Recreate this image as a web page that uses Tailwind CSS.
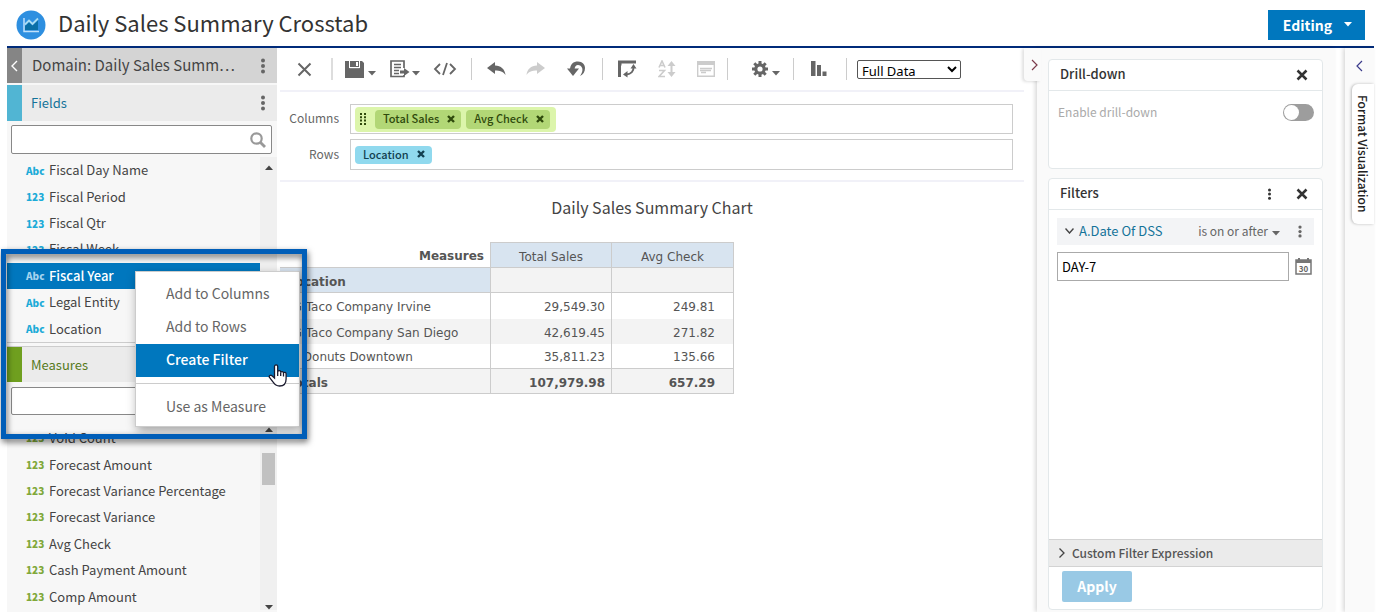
<!DOCTYPE html>
<html lang="en">
<head>
<meta charset="utf-8">
<title>Daily Sales Summary Crosstab</title>
<script src="https://cdn.jsdelivr.net/npm/@tailwindcss/browser@4"></script>
</head>
<body class="flex h-screen flex-col overflow-hidden bg-white pl-[7px] pr-0.5 font-['Noto_Sans_CJK_SC','Noto_Sans',sans-serif] text-[13px] leading-5 text-[#444]">
<svg class="hidden">
  <symbol id="dots" viewBox="0 0 4 16"><circle cx="2" cy="2.5" r="2"/><circle cx="2" cy="8" r="2"/><circle cx="2" cy="13.5" r="2"/></symbol>
  <symbol id="close" viewBox="0 0 12 12"><path d="M1.5 1.5l9 9M10.500 1.500l-9 9" fill="none" stroke="currentColor" stroke-width="2.500"/></symbol>
  <symbol id="remove" viewBox="0 0 8 8"><path d="M1 1l6 6M7 1L1 7" fill="none" stroke="currentColor" stroke-width="2.400"/></symbol>
  <symbol id="caret" viewBox="0 0 8 5"><path d="M0 0h8L4 4.500z"/></symbol>
</svg>

<header class="flex h-12 shrink-0 items-center border-b-2 border-[#002b7a] pl-[9px] pr-[9px] pt-[3px]">
  <svg class="mr-3 size-[30px] shrink-0" viewBox="0 0 30 30">
    <circle cx="15" cy="15" r="14.500" fill="#2e8fe0"/>
    <path d="M9 20V16l4-4 3.500 3.500L22 10v10z" fill="#0a6fa6"/>
    <path d="M8 8v13.500h15" fill="none" stroke="#bfe0fa" stroke-width="1.500"/>
    <path d="M9 14.500l4-4 3.500 3.500 5.500-5.500" fill="none" stroke="#a9dcf2" stroke-width="1.800"/>
  </svg>
  <h1 class="flex-1 pb-[5px] text-[22px] leading-8 text-[#333]">Daily Sales Summary Crosstab</h1>
  <button class="flex h-[30px] w-[97px] items-center justify-end gap-3 bg-[#0077be] pr-[13px] text-sm font-bold text-white">Editing
    <svg class="h-[5px] w-2 fill-current"><use href="#caret"/></svg>
  </button>
</header>

<div class="flex min-h-0 flex-1">
  <aside class="relative flex w-[270px] shrink-0 flex-col bg-[#f7f7f7]">
    <div class="flex h-[35px] shrink-0 items-center bg-[#d4d4d4] pr-3">
      <button class="flex h-full w-[15px] items-center justify-center bg-[#858585]" aria-label="Collapse">
        <svg class="h-3 w-2" viewBox="0 0 8 12"><path d="M6 1L1 6l5 5" fill="none" stroke="#fff" stroke-width="1.400"/></svg>
      </button>
      <h2 class="flex-1 pb-0.5 pl-2.5 text-[15px]">Domain: Daily Sales Summ…</h2>
      <button aria-label="Domain options"><svg class="h-4 w-1 fill-[#666]"><use href="#dots"/></svg></button>
    </div>
    <div class="mt-0.5 flex h-9 shrink-0 items-center bg-[#ebebeb] pr-3">
      <span class="h-full w-[15px] bg-[#51b5d3]"></span>
      <h3 class="flex-1 pl-[9px] text-[#147399]">Fields</h3>
      <button aria-label="Field options"><svg class="h-4 w-1 fill-[#666]"><use href="#dots"/></svg></button>
    </div>
    <label class="ml-1 mr-[5px] mt-1 flex h-[29px] shrink-0 items-center rounded-[2px] border border-[#888] bg-white pr-[5px]">
      <input type="text" aria-label="Search fields" class="w-0 flex-1 outline-none">
      <svg class="size-4" viewBox="0 0 16 16" fill="none" stroke="#999"><circle cx="6.500" cy="6.500" r="5.200" stroke-width="2.200"/><path d="M10 10l5 5" stroke-width="2.800"/></svg>
    </label>
    <div class="mt-[3px] flex h-[186px] shrink-0 border-b border-[#ccc]">
      <ul class="flex flex-1 flex-col [&>li]:flex [&>li]:flex-1 [&>li]:items-center [&>li]:pl-[19px] [&_b]:w-[23px] [&_b]:pt-px [&_b]:text-[10px] [&_b]:font-black [&_b]:text-[#1cabd8]">
        <li><b>Abc</b>Fiscal Day Name</li>
        <li><b>123</b>Fiscal Period</li>
        <li><b>123</b>Fiscal Qtr</li>
        <li><b>123</b>Fiscal Week</li>
        <li class="bg-[#0077be] font-medium text-white [&>b]:text-[#a5d3ee]!"><b>Abc</b>Fiscal Year</li>
        <li><b>Abc</b>Legal Entity</li>
        <li><b>Abc</b>Location</li>
      </ul>
      <div class="w-[17px] bg-[#f0f0f0] pl-[5px] pt-2"><svg class="h-[5px] w-2 rotate-180 fill-[#444]"><use href="#caret"/></svg></div>
    </div>
    <div class="mt-[3px] flex h-9 shrink-0 items-center border-t border-[#ccc] bg-[#ebebeb]">
      <span class="h-full w-[15px] bg-[#6f9f1f]"></span>
      <h3 class="pl-[9px] text-[#567a1c]">Measures</h3>
    </div>
    <label class="ml-1 mr-[5px] mt-[5px] flex h-7 shrink-0 items-center rounded-[2px] border border-[#888] bg-white">
      <input type="text" aria-label="Search measures" class="w-0 flex-1 outline-none">
    </label>
    <div class="mt-[10px] flex h-[185px] shrink-0">
      <ul class="flex flex-1 flex-col [&>li]:flex [&>li]:flex-1 [&>li]:items-center [&>li]:pl-[19px] [&_b]:w-[23px] [&_b]:text-[10px] [&_b]:font-black [&_b]:text-[#80a83a]">
        <li><b>123</b>Void Count</li>
        <li><b>123</b>Forecast Amount</li>
        <li><b>123</b>Forecast Variance Percentage</li>
        <li><b>123</b>Forecast Variance</li>
        <li><b>123</b>Avg Check</li>
        <li><b>123</b>Cash Payment Amount</li>
        <li><b>123</b>Comp Amount</li>
      </ul>
      <div class="flex w-[17px] flex-col items-center bg-[#f0f0f0] pt-0.5">
        <svg class="h-[5px] w-2 rotate-180 fill-[#444]"><use href="#caret"/></svg>
        <span class="mt-[21px] h-8 w-[13px] bg-[#c1c1c1]"></span>
        <svg class="mt-auto h-[5px] w-2 fill-[#444]"><use href="#caret"/></svg>
      </div>
    </div>

    <menu class="absolute left-32 top-[223px] z-10 w-[165px] border border-[#ccc] bg-white pb-0.5 pt-1.5 text-sm text-[#666] shadow-[2px_4px_10px_rgba(0,0,0,0.35)] [&_button]:h-[33px] [&_button]:w-full [&_button]:pb-1 [&_button]:pl-[30px] [&_button]:text-left">
      <li><button>Add to Columns</button></li>
      <li><button>Add to Rows</button></li>
      <li><button class="bg-[#0077be] font-medium text-white">Create Filter</button></li>
      <li class="mt-1.5 border-t border-[#ccc] pt-[7px]"><button>Use as Measure</button></li>
    </menu>
    <div class="absolute -left-1.5 top-[201px] z-20 h-[190px] w-[306px] border-[5px] border-[#005eb8] drop-shadow-[1px_3px_3px_rgba(0,0,0,0.6)]"></div>
    <svg class="absolute left-[261px] top-[316px] z-30 h-[23px] w-[19px]" viewBox="0 0 19 23"><path d="M6.500 14V2.500a1.600 1.600 0 0 1 3.200 0V8a1.500 1.500 0 0 1 3 .3 1.500 1.500 0 0 1 2.800.7 1.400 1.400 0 0 1 2.600.8V15c0 4-2 7-6.500 7-3.500 0-5-1.500-6.500-4L1.500 13.500c-1-1.800 1-3 2.500-1.700zM9.700 8v4M12.700 8.500V12M15.500 9.500V12.500" fill="#fff" stroke="#1a1a2e" stroke-width="1.300"/></svg>
  </aside>

  <main class="ml-[3px] min-w-0 flex-1">
    <div class="flex h-[44px] items-center border-b-2 border-[#f1f1f8] fill-[#666] text-[#666]">
      <button class="ml-[17px]" aria-label="Close"><svg class="size-[15px]" viewBox="0 0 15 15"><path d="M1.500 1.500l12 12M13.500 1.500l-12 12" stroke="currentColor" stroke-width="2"/></svg></button>
      <span class="ml-[19px] h-[22px] w-0.5 bg-[#ddd]"></span>
      <button class="ml-3 flex items-center gap-1" aria-label="Save"><svg class="h-[17px] w-[19px]" viewBox="0 0 19 17"><path d="M0 0h4v7h11V0h2l2 2v15H0z"/><path d="M5 0h9v6H5z"/><path d="M4.500 0v6.700h10V0" fill="none" stroke="#fff" stroke-width="1"/><path d="M11 1h2v4h-2z" fill="#fff"/></svg><svg class="mt-2 h-[5px] w-2"><use href="#caret"/></svg></button>
      <button class="ml-[14px] flex items-center gap-0.5" aria-label="Export"><svg class="h-[18px] w-5" viewBox="0 0 20 18"><path d="M14 8V1H1v15.500h13V15" fill="none" stroke="currentColor" stroke-width="1.700"/><path d="M4 4.500h7M4 7.500h7M4 10.500h5M4 13.500h5" stroke="currentColor" stroke-width="1.300"/><path d="M10 10.500h4V8l5.500 4-5.500 4v-2.500h-4z"/></svg><svg class="mt-2 h-[5px] w-2"><use href="#caret"/></svg></button>
      <button class="ml-[13px]" aria-label="View query"><svg class="h-4 w-6" viewBox="0 0 24 16" fill="none" stroke="currentColor" stroke-width="1.800"><path d="M7 3L2 8l5 5M17 3l5 5-5 5M14 2l-4 12"/></svg></button>
      <span class="ml-[14px] h-[22px] w-px bg-[#ccc]"></span>
      <button class="ml-[15px]" aria-label="Undo"><svg class="h-[14px] w-[19px]" viewBox="0 0 19 14"><path d="M0 6L8 0v3.500c6 0 10 4 10.500 9.500C16 9.500 13 8.500 8 8.500V12z"/></svg></button>
      <button class="ml-5 fill-[#ccc]" aria-label="Redo"><svg class="h-[14px] w-[19px]" viewBox="0 0 19 14"><path d="M19 6L11 0v3.500C5 3.500 1 7.500.5 13 3 9.500 6 8.500 11 8.500V12z"/></svg></button>
      <button class="ml-[22px]" aria-label="Undo all"><svg class="h-[17px] w-[18px]" viewBox="0 0 18 17"><path d="M0 7.500h12L6 15z"/><path d="M3 9C3 3 6.500.5 11 .5c4.500 0 7 3 7 6.500 0 4-2 6.500-5 8 2-3 2.800-5 2.300-7.500C14.800 5 12.500 4 11 4 9 4 7.500 5.500 7.500 9z"/></svg></button>
      <span class="ml-[17px] h-[22px] w-px bg-[#ccc]"></span>
      <button class="ml-[15px]" aria-label="Switch groups"><svg class="h-[18px] w-[19px]" viewBox="0 0 19 18"><path d="M0 4.500h3V17H0zM0 .5h18v3H3.500v2H0z"/><path d="M15.500 7c.5 4-2.500 7-7 7.500" fill="none" stroke="currentColor" stroke-width="1.800"/><path d="M12.500 8.500L15.500 4 18.500 8.500zM9.500 11v6.500L5 14.500z"/></svg></button>
      <button class="ml-[21px] fill-[#ccc] text-[#ccc]" aria-label="Sort"><svg class="h-[18px] w-[18px]" viewBox="0 0 18 18"><path d="M1 7.500L4 1l3 6.500M2 5.500h4M1 10.500h5.500L1 16.500h6" fill="none" stroke="currentColor" stroke-width="1.600"/><path d="M13.500 1l4 5h-3v6h3l-4 5-4-5h3V6h-3z"/></svg></button>
      <button class="ml-[21px] text-[#ccc]" aria-label="Input controls"><svg class="h-4 w-[18px]" viewBox="0 0 18 16"><path d="M0 0h18v4H0z" fill="#ccc"/><path d="M.7 4v11.300h16.600V4M3 7.500h12M3 9.500h11M4 11.500h5" fill="none" stroke="currentColor" stroke-width="1.400"/></svg></button>
      <span class="ml-3 h-[22px] w-px bg-[#ccc]"></span>
      <button class="ml-6 flex items-center gap-1" aria-label="Options"><svg class="size-4" viewBox="0 0 16 16"><circle cx="8" cy="8" r="4.200" fill="none" stroke="currentColor" stroke-width="3.200"/><path d="M8 0v3M8 13v3M0 8h3M13 8h3M2.300 2.300l2.200 2.200M11.500 11.500l2.200 2.200M13.700 2.300l-2.200 2.200M4.500 11.500l-2.200 2.200" stroke="currentColor" stroke-width="3"/></svg><svg class="mt-2 h-[5px] w-2"><use href="#caret"/></svg></button>
      <span class="ml-[13px] h-[22px] w-px bg-[#ccc]"></span>
      <button class="ml-[17px]" aria-label="Chart type"><svg class="h-4 w-4" viewBox="0 0 16 16"><path d="M0 0h4.500v15H0zM6 4h4v11H6zM11.500 10.500h4V15h-4z"/></svg></button>
      <span class="ml-[19px] h-[22px] w-px bg-[#ccc]"></span>
      <select aria-label="Data level" class="ml-2.5 h-[19px] w-[104px] rounded-[2px] border border-[#555] bg-white font-['Noto_Sans',sans-serif] text-[13px] leading-4 text-black"><option>Full Data</option></select>
    </div>
    <div class="flex h-[90px] flex-col gap-[5px] border-b-2 border-[#f1f1f8] pr-[11px] pt-3 text-xs text-[#666]">
      <div class="flex h-[30px] items-center">
        <span class="w-[59px] pb-0.5 text-right">Columns</span>
        <div class="ml-[11px] flex h-full flex-1 items-center border border-[#ccc] pl-1">
          <div class="flex h-[25px] items-center gap-[5px] rounded bg-[#dcf5ab] pl-[5px] pr-1.5 text-[11px] font-medium text-[#2f4a0c]">
            <svg class="mr-1 h-3 w-1.5 fill-current" viewBox="0 0 6 12"><path d="M0 0h2v2H0zM4 0h2v2H4zM0 3.300h2v2H0zM4 3.300h2v2H4zM0 6.600h2v2H0zM4 6.600h2v2H4zM0 10h2v2H0zM4 10h2v2H4z"/></svg>
            <span class="flex h-[19px] items-center gap-2 rounded bg-[#b2d776] pb-px pl-2 pr-1.5">Total Sales<button aria-label="Remove Total Sales"><svg class="size-2"><use href="#remove"/></svg></button></span>
            <span class="flex h-[19px] items-center gap-2 rounded bg-[#b2d776] pb-px pl-2 pr-1.5">Avg Check<button aria-label="Remove Avg Check"><svg class="size-2"><use href="#remove"/></svg></button></span>
          </div>
        </div>
      </div>
      <div class="flex h-[31px] items-center">
        <span class="w-[59px] pb-0.5 text-right">Rows</span>
        <div class="ml-[11px] flex h-full flex-1 items-center border border-[#ccc] pl-1">
          <span class="flex h-[18px] items-center gap-2 rounded bg-[#90d9ee] pb-px pl-2 pr-[7px] text-[11px] font-medium text-[#123f50]">Location<button aria-label="Remove Location"><svg class="size-2"><use href="#remove"/></svg></button></span>
        </div>
      </div>
    </div>
    <h2 class="mt-[13px] text-center text-base text-[#444]">Daily Sales Summary Chart</h2>
    <table class="mt-[23px] w-[454px] table-fixed border-collapse font-['DejaVu_Sans',sans-serif] text-xs text-[#555] [&_td]:h-[25px] [&_td]:p-0 [&_td]:pr-1.5 [&_td]:pt-[3px] [&_th]:h-[25px] [&_th]:p-0 [&_th]:pt-[3px]">
      <colgroup><col><col class="w-[121px]"><col class="w-[122px]"></colgroup>
      <thead>
        <tr><th class="pr-1.5! text-right font-bold">Measures</th><th class="border border-[#ccc] bg-[#d8e4f0] font-normal">Total Sales</th><th class="border border-[#ccc] bg-[#d8e4f0] font-normal">Avg Check</th></tr>
        <tr><th class="border-y border-[#ccc] bg-[#d8e4f0] pl-2! text-left font-bold">Location</th><td class="border border-[#ccc] bg-[#f3f3f3]"></td><td class="border border-[#ccc] bg-[#f3f3f3]"></td></tr>
      </thead>
      <tbody class="text-right">
        <tr class="h-[26px]"><th class="pl-px! text-left font-normal">BiG Taco Company Irvine</th><td class="border-x border-[#ccc]">29,549.30</td><td class="border-r border-[#ccc] pr-[18px]!">249.81</td></tr>
        <tr class="bg-[#f3f3f3]"><th class="pl-px! text-left font-normal">BiG Taco Company San Diego</th><td class="border-x border-[#ccc]">42,619.45</td><td class="border-r border-[#ccc] pr-[18px]!">271.82</td></tr>
        <tr><th class="pl-px! text-left font-normal">Mr. Donuts Downtown</th><td class="border-x border-[#ccc]">35,811.23</td><td class="border-r border-[#ccc] pr-[18px]!">135.66</td></tr>
        <tr class="border-y border-[#ccc] bg-[#f3f3f3] font-bold"><th class="pl-2! text-left">Totals</th><td class="border-x border-[#ccc]">107,979.98</td><td class="border-r border-[#ccc] pr-[18px]!">657.29</td></tr>
      </tbody>
    </table>
  </main>

  <div class="relative z-10 flex w-[311px] shrink-0">
    <button class="z-10 -mr-1 flex h-[33px] w-[17px] items-center justify-end rounded-bl bg-[#fafafa] pr-[3px] shadow-[-2px_1px_3px_rgba(0,0,0,0.12)]" aria-label="Collapse filters"><svg class="h-3 w-[7px]" viewBox="0 0 7 12"><path d="M1 1l5 5-5 5" fill="none" stroke="#7c3b4b" stroke-width="1.200"/></svg></button>
    <div class="flex flex-1 flex-col gap-[9px] bg-[#fafafa] pb-0.5 pl-[11px] pr-3 pt-[11px] shadow-[-2px_0_4px_rgba(0,0,0,0.15)]">
      <section class="h-[110px] shrink-0 rounded border border-[#e3e8ea] bg-white">
        <div class="flex h-[31px] items-center justify-between border-b border-[#e3e8ea] pl-[11px] pr-[14px] text-[#333]">
          <h3 class="pb-0.5 font-medium">Drill-down</h3>
          <button aria-label="Close drill-down"><svg class="size-3"><use href="#close"/></svg></button>
        </div>
        <label class="flex items-center justify-between pl-[9px] pr-2 pt-[11px] text-xs leading-5 text-[#aaa]">Enable drill-down
          <input type="checkbox" class="h-[17px] w-[31px] appearance-none rounded-full bg-[#9d9d9d] before:m-px before:block before:size-[15px] before:rounded-full before:bg-white before:content-['']">
        </label>
      </section>
      <section class="flex min-h-0 flex-1 flex-col rounded border border-[#e3e8ea] bg-white">
        <div class="flex h-[31px] items-center border-b border-[#e3e8ea] pl-[11px] pr-[14px] text-[#333]">
          <h3 class="flex-1 pb-0.5 font-medium">Filters</h3>
          <button class="mr-[25px]" aria-label="Filter options"><svg class="h-3 w-[3px] fill-current"><use href="#dots"/></svg></button>
          <button aria-label="Close filters"><svg class="size-3"><use href="#close"/></svg></button>
        </div>
        <div class="mx-2 mt-2 flex h-[27px] items-center bg-[#f3f4f6] pb-px pl-2 pr-3 text-[#666]">
          <svg class="h-[6px] w-[9px]" viewBox="0 0 9 6"><path d="M.5.5l4 4.500 4-4.500" fill="none" stroke="#444" stroke-width="1.400"/></svg>
          <span class="flex-1 pl-[5px] text-[#147399]">A.Date Of DSS</span>
          <button class="flex items-center gap-1 text-xs">is on or after<svg class="mt-1 h-[5px] w-2 fill-current"><use href="#caret"/></svg></button>
          <button class="ml-[18px]" aria-label="Date filter options"><svg class="h-[13px] w-[4px] fill-current"><use href="#dots"/></svg></button>
        </div>
        <div class="mx-2 mt-[7px] flex items-center">
          <input type="text" aria-label="Date" value="DAY-7" class="h-[29px] w-0 flex-1 border border-[#aaa] bg-white px-1 text-[13px] text-black">
          <button class="ml-1.5 mr-0.5" aria-label="Pick a date"><svg class="h-[17px] w-[17px]" viewBox="0 0 17 17"><path d="M1 2h15v14H1z" fill="none" stroke="#777" stroke-width="1.500"/><path d="M1 2h15v3H1zM3 0h2v3H3zM12 0h2v3h-2z" fill="#777"/><text x="8.500" y="13.500" text-anchor="middle" font-size="8" font-weight="bold" fill="#666">30</text></svg></button>
        </div>
        <button class="mt-auto flex h-7 items-center border-y border-[#d3d3d3] bg-[#ebebeb] pl-2.5 text-xs text-[#555]">
          <svg class="mr-[7px] h-[10px] w-1.5" viewBox="0 0 6 10"><path d="M.5.5L5 5 .5 9.500" fill="none" stroke="#444" stroke-width="1.300"/></svg><span class="font-medium">Custom Filter Expression</span>
        </button>
        <div class="pb-[7px] pl-[13px] pt-1">
          <button class="block h-[31px] w-[70px] rounded-[2px] bg-[#99c9e5] pb-0.5 text-sm font-bold text-white">Apply</button>
        </div>
      </section>
    </div>
  </div>
  <div class="relative z-10 ml-[10px] w-[29px] shrink-0 bg-[#fafafa] shadow-[-2px_0_4px_rgba(0,0,0,0.15)]">
    <button class="flex h-[36px] w-full items-center justify-center" aria-label="Expand format panel"><svg class="h-3 w-[7px]" viewBox="0 0 7 12"><path d="M6 1L1 6l5 5" fill="none" stroke="#3b3b8b" stroke-width="1.200"/></svg></button>
    <button class="ml-[7px] flex h-[140px] w-[22px] items-center justify-center rounded-l-md bg-white text-xs font-medium text-[#222] shadow-[-1px_0_3px_rgba(0,0,0,0.25)] [writing-mode:vertical-rl]">Format Visualization</button>
  </div>
</div>
</body>
</html>
